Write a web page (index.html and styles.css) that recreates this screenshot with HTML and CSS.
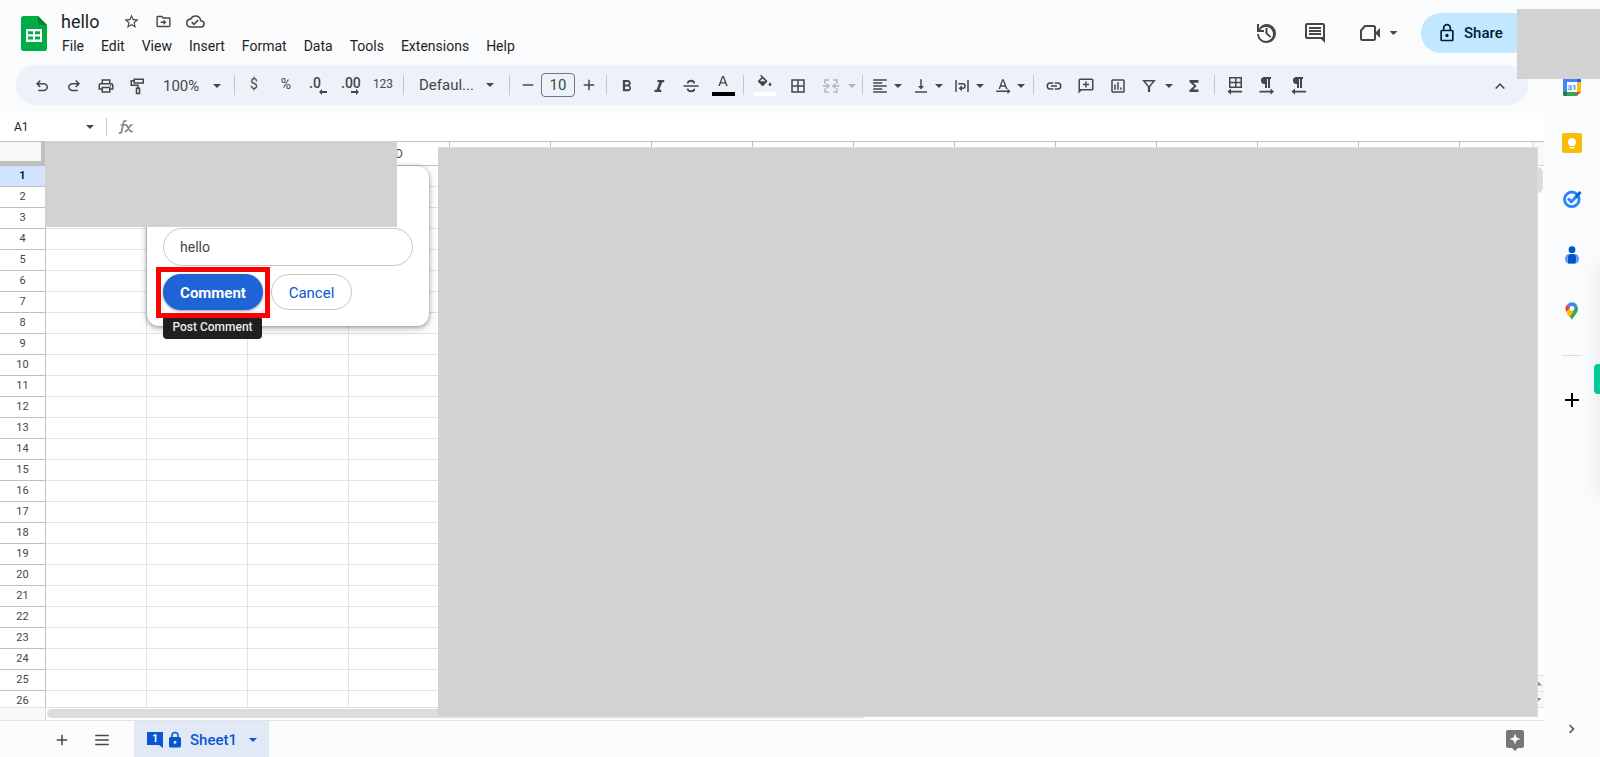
FILE: index.html
```html
<!DOCTYPE html>
<html lang="en">
<head>
<meta charset="utf-8">
<title>hello</title>
<link rel="stylesheet" href="styles.css">
</head>
<body>
<svg class="defs" aria-hidden="true">
  <symbol id="undo" viewBox="0 -960 960 960"><path d="M280-200v-80h284q63 0 109.500-40T720-420q0-60-46.500-100T564-560H312l104 104-56 56-200-200 200-200 56 56-104 104h252q97 0 166.500 63T800-420q0 94-69.500 157T564-200H280Z"/></symbol>
  <symbol id="lock" viewBox="0 0 24 24"><path d="M18 8h-1V6A5 5 0 0 0 7 6v2H6a2 2 0 0 0-2 2v10c0 1.100.9 2 2 2h12a2 2 0 0 0 2-2V10a2 2 0 0 0-2-2ZM9 6a3 3 0 0 1 6 0v2H9V6Zm9 14H6V10h12v10Zm-6-3a2 2 0 1 0 0-4 2 2 0 0 0 0 4Z"/></symbol>
  <symbol id="lockfill" viewBox="0 0 24 24"><path d="M18 8h-1V6A5 5 0 0 0 7 6v2H6a2 2 0 0 0-2 2v10c0 1.100.9 2 2 2h12a2 2 0 0 0 2-2V10a2 2 0 0 0-2-2ZM9 6a3 3 0 0 1 6 0v2H9V6Zm3 11a2 2 0 1 1 0-4 2 2 0 0 1 0 4Z"/></symbol>
  <symbol id="pilcrow" viewBox="0 0 18 18"><path d="M8 1h7v2h-1v9h-2V3h-1v9H9V8a3.500 3.500 0 0 1-1-7Z"/></symbol>
</svg>

<header class="top">
  <a class="logo" href="#" aria-label="Sheets home"><svg viewBox="0 0 26 35"><path fill="#00ac47" d="M2.500 0H17l9 9v23.500a2.500 2.500 0 0 1-2.500 2.500h-21A2.500 2.500 0 0 1 0 32.500v-30A2.500 2.500 0 0 1 2.500 0Z"/><path fill="#00832d" d="M17 0l9 9h-9Z"/><path fill="#fff" fill-rule="evenodd" d="M5 13h16v13H5Zm2 2.200v3h5v-3Zm7 0v3h5v-3Zm-7 5.200v3h5v-3Zm7 0v3h5v-3Z"/></svg></a>
  <div class="doc">
    <div class="doc-name">
      <h1>hello</h1>
      <button class="mini" aria-label="Star"><svg viewBox="0 0 24 24"><path d="m22 9.240-7.190-.62L12 2 9.190 8.630 2 9.240l5.460 4.730L5.820 21 12 17.270 18.180 21l-1.630-7.030L22 9.240ZM12 15.400l-3.760 2.270 1-4.280-3.320-2.880 4.380-.38L12 6.100l1.710 4.040 4.380.38-3.320 2.880 1 4.280L12 15.400Z"/></svg></button>
      <button class="mini" aria-label="Move"><svg viewBox="0 0 24 24"><path d="M20 6h-8l-2-2H4a2 2 0 0 0-2 2v12c0 1.100.9 2 2 2h16a2 2 0 0 0 2-2V8a2 2 0 0 0-2-2Zm0 12H4V6h5.200l2 2H20v10Zm-8-1 4-4-4-4v3H8v2h4v3Z"/></svg></button>
      <button class="mini" aria-label="Saved to cloud"><svg viewBox="0 0 24 24"><path d="M19.350 10.040A7.490 7.490 0 0 0 12 4a7.500 7.500 0 0 0-6.650 4.040A6 6 0 0 0 6 20h13a5 5 0 0 0 .35-9.960ZM19 18H6a4 4 0 0 1-.44-7.980l1.070-.11.500-.95a5.500 5.500 0 0 1 10.260 1.470l.3 1.500 1.530.11A3 3 0 0 1 19 18Zm-9-3.820-2.090-2.090L6.500 13.500 10 17l6.010-6.010-1.410-1.410L10 14.180Z"/></svg></button>
    </div>
    <nav class="menus"><button>File</button><button>Edit</button><button>View</button><button>Insert</button><button>Format</button><button>Data</button><button>Tools</button><button>Extensions</button><button>Help</button></nav>
  </div>
  <div class="actions">
    <button aria-label="Version history"><svg viewBox="0 0 24 24"><path d="M13 3a9 9 0 0 0-8 4.900V3H3v8h7V9H6.200A7 7 0 1 1 5 13H3a9.500 9.500 0 1 0 10-10Zm-1.500 4v5.800l4.500 4 1.300-1.400-3.800-3.400V7Z"/></svg></button>
    <button aria-label="Comments"><svg viewBox="0 0 24 24"><path d="M22 4a2 2 0 0 0-2-2H4a2 2 0 0 0-2 2v12c0 1.100.9 2 2 2h14l4 4V4Zm-2 12H4V4h16v12ZM6 12h12v2H6Zm0-3h12v2H6Zm0-3h12v2H6Z"/></svg></button>
    <button class="meet" aria-label="Meet"><svg viewBox="0 0 24 24"><path fill="none" stroke="currentColor" stroke-width="2" d="M7 5h8.500a1.500 1.500 0 0 1 1.500 1.500v11a1.500 1.500 0 0 1-1.500 1.500h-11A1.500 1.500 0 0 1 3 17.500V9.500Z"/><path d="m17 12 5-5v10Z"/></svg><i class="arrow"></i></button>
    <button class="share"><svg><use href="#lock"/></svg>Share</button>
  </div>
</header>

<main class="app">
  <div class="toolbar" role="toolbar">
    <button aria-label="Undo"><svg><use href="#undo"/></svg></button>
    <button aria-label="Redo"><svg class="flip"><use href="#undo"/></svg></button>
    <button aria-label="Print"><svg viewBox="0 0 24 24"><path d="M19 8h-1V3H6v5H5a3 3 0 0 0-3 3v6h4v4h12v-4h4v-6a3 3 0 0 0-3-3ZM8 5h8v3H8V5Zm8 14H8v-4h8v4Zm2-4v-2H6v2H4v-4c0-.6.400-1 1-1h14c.6 0 1 .4 1 1v4h-2Z"/><circle cx="18" cy="11.500" r="1"/></svg></button>
    <button aria-label="Paint format"><svg viewBox="0 0 24 24"><path fill="none" stroke="currentColor" stroke-width="2" d="M7 3h12v5H7ZM7 5H3v6h9v4M10 15h4v7h-4Z"/></svg></button>
    <button class="zoom">100%<i class="arrow"></i></button>
    <span class="sep"></span>
    <button class="sym">$</button>
    <button class="sym">%</button>
    <button class="dec" aria-label="Decrease decimal places"><b>.0</b><svg viewBox="0 0 8 6"><path d="M3 0v2h5v2H3v2L0 3Z"/></svg></button>
    <button class="dec" aria-label="Increase decimal places"><b>.00</b><svg viewBox="0 0 8 6"><path d="M5 0v2H0v2h5v2l3-3Z"/></svg></button>
    <button class="num">123</button>
    <span class="sep"></span>
    <button class="font">Defaul...<i class="arrow"></i></button>
    <span class="sep"></span>
    <button class="step" aria-label="Decrease font size"><svg viewBox="0 0 24 24"><path d="M5 11h14v2H5Z"/></svg></button>
    <input class="size" aria-label="Font size" value="10">
    <button class="step" aria-label="Increase font size"><svg viewBox="0 0 24 24"><path d="M5 11h6V5h2v6h6v2h-6v6h-2v-6H5Z"/></svg></button>
    <span class="sep"></span>
    <button aria-label="Bold"><svg viewBox="0 0 24 24"><path d="M15.600 11.300A4.200 4.200 0 0 0 13.250 4H6.500v15h7.300a4.300 4.300 0 0 0 1.800-7.700ZM9.500 6.600h3.200a1.650 1.650 0 0 1 0 3.300H9.500Zm3.800 9.800H9.500v-3.800h3.800a1.900 1.900 0 0 1 0 3.800Z"/></svg></button>
    <button aria-label="Italic"><svg viewBox="0 0 24 24"><path d="M10 4v3h2.600l-3.900 10H6v3h9v-3h-2.600l3.900-10H19V4Z"/></svg></button>
    <button aria-label="Strikethrough"><svg viewBox="0 0 24 24"><path d="M2 11h20v2H2Z"/><path fill="none" stroke="currentColor" stroke-width="2.400" d="M16.500 8.500C16 6.500 14.500 5 12 5S7.500 6.500 7.500 8.500M7.300 15.500c.5 2.400 2.200 3.500 4.700 3.500 2.800 0 4.500-1.300 4.500-3.500"/></svg></button>
    <button class="swatch black" aria-label="Text color"><svg viewBox="0 0 24 24"><path d="M10.600 3 5 18h2.300l1.300-3.700h6.800l1.300 3.700H19L13.400 3Zm-1.300 9.300L12 5l2.700 7.300Z"/></svg></button>
    <span class="sep"></span>
    <button class="swatch white" aria-label="Fill color"><svg viewBox="0 0 24 24"><path d="M16.600 9.900 7.600 1 6.200 2.400l2.400 2.400-5.200 5.100a1.500 1.500 0 0 0 0 2.200l5.500 5.500c.6.600 1.500.6 2.200 0l5.500-5.500c.5-.6.500-1.600-.1-2.200ZM5.800 11 10 6.800l4.200 4.200Zm15.200 1.500s-2 2.200-2 3.500a2 2 0 0 0 4 0c0-1.300-2-3.500-2-3.500Z"/></svg></button>
    <button class="borders" aria-label="Borders"><svg viewBox="0 0 24 24"><path d="M3 3v18h18V3Zm8 16H5v-6h6Zm0-8H5V5h6Zm8 8h-6v-6h6Zm0-8h-6V5h6Z"/></svg></button>
    <button class="split wide off" aria-label="Merge cells" disabled><svg viewBox="0 0 24 24"><path fill="none" stroke="currentColor" stroke-width="2" d="M9 4H4v5M4 15v5h5M15 4h5v5M20 15v5h-5M1 12h6M17 12h6"/><path d="m6 8 5 4-5 4Zm12 0-5 4 5 4Z"/></svg><i class="arrow"></i></button>
    <span class="sep"></span>
    <div class="group">
      <button class="split" aria-label="Horizontal align"><svg viewBox="0 0 24 24"><path d="M3 3h18v2H3Zm0 4h12v2H3Zm0 4h18v2H3Zm0 4h12v2H3Zm0 4h18v2H3Z"/></svg><i class="arrow"></i></button>
      <button class="split" aria-label="Vertical align"><svg viewBox="0 0 24 24"><path d="M16 12h-3V3h-2v9H8l4 4.500ZM4 19v2h16v-2Z"/></svg><i class="arrow"></i></button>
      <button class="split" aria-label="Text wrapping"><svg viewBox="0 0 24 24"><path d="M3 4h2v16H3Zm16 0h2v16h-2Z"/><path fill="none" stroke="currentColor" stroke-width="2" d="M7 9h6a3 3 0 0 1 0 6h-2"/><path d="m7.500 15 4.500-4v8Z"/></svg><i class="arrow"></i></button>
      <button class="split" aria-label="Text rotation"><svg viewBox="0 0 24 24"><path d="M10.900 3 6 16h2.100l1-3h5.700l1 3H18L13 3ZM9.800 11 12 5l2.200 6ZM3 18h15v-2.500l4 3.500-4 3.500V20H3Z"/></svg><i class="arrow"></i></button>
    </div>
    <span class="sep"></span>
    <button aria-label="Insert link"><svg viewBox="0 0 24 24"><path d="M17 7h-4v2h4a3 3 0 0 1 0 6h-4v2h4a5 5 0 0 0 0-10Zm-6 8H7a3 3 0 0 1 0-6h4V7H7a5 5 0 0 0 0 10h4v-2Zm-3-4h8v2H8Z"/></svg></button>
    <button aria-label="Insert comment"><svg viewBox="0 0 24 24"><path d="M20 2H4a2 2 0 0 0-2 2v18l4-4h14a2 2 0 0 0 2-2V4a2 2 0 0 0-2-2Zm0 14H4V4h16Zm-9-2h2v-3h3V9h-3V6h-2v3H8v2h3Z"/></svg></button>
    <button aria-label="Insert chart"><svg viewBox="0 0 24 24"><path d="M19 3H5a2 2 0 0 0-2 2v14c0 1.100.9 2 2 2h14a2 2 0 0 0 2-2V5a2 2 0 0 0-2-2Zm0 16H5V5h14ZM7 10h2v7H7Zm4-3h2v10h-2Zm4 7h2v3h-2Z"/></svg></button>
    <button class="split filter" aria-label="Filter"><svg viewBox="0 0 24 24"><path fill="none" stroke="currentColor" stroke-width="2" d="M5 5h14l-7 8.500Z"/><path d="M10.500 12h3v8h-3Z"/></svg><i class="arrow"></i></button>
    <button aria-label="Functions"><svg viewBox="0 0 24 24"><path d="M18 4H6v2.500L12 12l-6 5.500V20h12v-3.500h-7L15.500 12 11 7.500h7Z"/></svg></button>
    <span class="sep"></span>
    <button aria-label="Sheet direction"><svg viewBox="0 0 18 18"><path d="M3 0v11h13V0Zm6 9.500H4.500V6.300H9Zm0-4.700H4.500V1.500H9Zm5.500 4.700h-4V6.300h4Zm0-4.700h-4V1.500h4ZM5 11.500v2.300h11v1.700H5v2.300l-3.500-3.200Z"/></svg></button>
    <button aria-label="Left to right"><svg viewBox="0 0 18 18"><use href="#pilcrow" x="-2" y="-1" width="18" height="18"/><path d="M1.500 13.800h11v-2.300l3.500 3.100-3.500 3.100v-2.300h-11Z"/></svg></button>
    <button aria-label="Right to left"><svg viewBox="0 0 18 18"><use href="#pilcrow" x="-2" y="-1" width="18" height="18"/><path d="M16 13.800H5v-2.300l-3.500 3.100L5 17.700v-2.300h11Z"/></svg></button>
    <button class="collapse" aria-label="Hide the menus"><svg viewBox="0 0 24 24"><path d="m12 8-6.500 6.500L7 16l5-5 5 5 1.500-1.500Z"/></svg></button>
  </div>

  <div class="formula">
    <button class="namebox">A1<i class="arrow"></i></button>
    <span class="fx"><svg viewBox="0 0 16 16"><path fill="none" stroke="currentColor" stroke-width="1.700" d="M8.500 2C6.500 1.200 5.600 2.600 5.300 4.500L3.700 12c-.3 1.700-1.300 2.600-2.900 2M2.500 6h5M7 6h1.500l4 6.500H15M14.500 6H13l-5 6.500H6.500"/></svg></span>
  </div>

  <section class="sheet">
    <div class="cells"><table><thead><tr><th class="corner"></th></tr></thead><tbody></tbody></table></div>
    <div class="vscroll"><div class="vhead"></div><div class="vthumb"></div><button aria-label="Scroll up"><i class="up"></i></button><button aria-label="Scroll down"><i class="arrow"></i></button></div>
    <div class="hscroll"><span></span><div></div></div>

    <form class="dialog" onsubmit="return false">
      <input class="reply" aria-label="Comment text" value="hello">
      <div class="dialog-actions"><button class="post">Comment</button><button class="cancel" type="button">Cancel</button></div>
      <div class="marker"></div>
      <div class="tip" role="tooltip">Post Comment</div>
    </form>
    <div class="mask mask-head"></div>
    <div class="mask mask-grid"></div>
  </section>

  <footer class="tabs">
    <button class="tool" aria-label="Add sheet"><svg viewBox="0 0 24 24"><path d="M5 11h6V5h2v6h6v2h-6v6h-2v-6H5Z"/></svg></button>
    <button class="tool" aria-label="All sheets"><svg viewBox="0 0 24 24"><path d="M3 5h18v2H3Zm0 6h18v2H3Zm0 6h18v2H3Z"/></svg></button>
    <button class="tab"><span class="count">1</span><svg><use href="#lockfill"/></svg>Sheet1<i class="arrow"></i></button>
    <button class="explore" aria-label="Explore"><svg viewBox="0 0 18 21"><path fill-rule="evenodd" d="M2 0h14a2 2 0 0 1 2 2v14a2 2 0 0 1-2 2h-4l-3 3-3-3H2a2 2 0 0 1-2-2V2a2 2 0 0 1 2-2Zm7 3.500L7.500 7.500l-4 1.500 4 1.500L9 14.500l1.500-4 4-1.500-4-1.500Z"/></svg></button>
  </footer>
</main>

<aside class="side">
  <button aria-label="Calendar"><svg viewBox="0 0 20 20"><path fill="#4285f4" d="M2.500 1H15v4H5v10H1V2.500A1.500 1.500 0 0 1 2.500 1Z"/><path fill="#1967d2" d="M15 1h2.500A1.500 1.500 0 0 1 19 2.500V5h-4Z"/><path fill="#fbbc04" d="M15 5h4v10h-4Z"/><path fill="#34a853" d="M5 15h10v4H5Z"/><path fill="#188038" d="M1 15h4v4H2.500A1.500 1.500 0 0 1 1 17.500Z"/><path fill="#ea4335" d="M15 15h4l-4 4Z"/><path fill="#fff" d="M5 5h10v10H5Z"/><text x="10" y="13" text-anchor="middle" fill="#4285f4">31</text></svg></button>
  <button aria-label="Keep"><svg viewBox="0 0 20 20"><rect width="20" height="20" rx="2" fill="#fbbc04"/><path fill="#fff" d="M10 5a4.200 4.200 0 0 0-2.500 7.500V13h5v-.5A4.200 4.200 0 0 0 10 5Zm-2.200 9h4.400v1.500H7.800Z"/></svg></button>
  <button aria-label="Tasks"><svg viewBox="0 0 20 20"><circle cx="9.800" cy="10.300" r="7.300" fill="none" stroke="#2684fc" stroke-width="2.800"/><path fill="none" stroke="#2684fc" stroke-width="3" d="m6 9.500 3.300 3.200 5-5"/><path fill="none" stroke="#0066da" stroke-width="3" d="m13.500 8.500 5-5.500"/></svg></button>
  <button aria-label="Contacts"><svg viewBox="0 0 20 20"><circle cx="10" cy="4.700" r="3.400" fill="#0057cc"/><rect x="3" y="9" width="14" height="9.500" rx="4.200" fill="#6e9bf7"/><path fill="#0057cc" d="M6 13c0-2.500 1-4 3-4h2c2 0 3 1.500 3 4 0 3 0 5.500-1 5.500H6Z"/></svg></button>
  <button aria-label="Maps"><svg viewBox="0 0 20 20"><path fill="#34a853" d="M10 19c1-3.500 6-6.500 6-11.500L14.800 4 5.500 13C8 15.500 9 17 10 19Z"/><path fill="#fbbc04" d="M4.500 11.500 8 8l3.500 3-4.200 5Z"/><path fill="#ea4335" d="M5.400 3.500A6 6 0 0 0 4.500 11l4-4Z"/><path fill="#4285f4" d="M5.400 3.500A6 6 0 0 1 15 4l-5 5Z"/><circle cx="10" cy="7.500" r="2.400" fill="#fff"/></svg></button>
  <hr>
  <button class="add" aria-label="Get add-ons"><svg viewBox="0 0 20 20"><path d="M3 9h6V3h2v6h6v2h-6v6H9v-6H3Z"/></svg></button>
  <button class="hide" aria-label="Hide side panel"><svg viewBox="0 0 20 20"><path d="m5 4.500 2-2 7.500 7.500L7 17.500l-2-2L10.500 10Z"/></svg></button>
  <div class="glow"></div>
  <div class="green"></div>
</aside>
<div class="mask mask-user"></div>
<script src="grid.js"></script>
</body>
</html>
```
FILE: styles.css
```css
* { box-sizing: border-box; }
body {
  margin: 0;
  height: 100vh;
  display: grid;
  grid-template: 65px minmax(0, 1fr) / minmax(0, 1fr) 56px;
  position: relative;
  overflow: hidden;
  background: #f9fbfd;
  color: #1f1f1f;
  font: 14px/20px Roboto, "Liberation Sans", sans-serif;
}
.defs { display: none; }
button, input { font: inherit; color: inherit; }
button { display: flex; align-items: center; justify-content: center; padding: 0; border: 0; background: none; }
svg { display: block; flex: none; fill: currentColor; }
.arrow { flex: none; width: 8px; height: 4px; background: currentColor; clip-path: polygon(0 0, 100% 0, 50% 100%); }
.up { flex: none; width: 8px; height: 4px; background: currentColor; clip-path: polygon(50% 0, 100% 100%, 0 100%); }

.top { grid-column: 1 / -1; display: flex; align-items: flex-start; padding-left: 21px; }
.logo { margin-top: 16px; }
.logo svg { width: 26px; height: 35px; }
.doc { padding: 9px 0 0 8px; }
.doc-name { display: flex; align-items: center; height: 25px; padding-left: 6px; }
.doc-name h1 { margin: 0 12px 0 0; width: 42px; font-size: 18px; line-height: 24px; font-weight: 400; }
.mini { width: 32px; height: 24px; color: #444746; }
.mini svg { width: 17px; height: 17px; }
.mini:last-child svg { width: 19px; height: 19px; }
.menus { display: flex; gap: 3px; }
.menus button { padding: 2px 7px; font-size: 14px; line-height: 20px; }
.actions { display: flex; align-items: center; margin: 13px 60px 0 auto; color: #444746; }
.actions > button { width: 49px; height: 40px; }
.actions svg { width: 24px; height: 24px; }
.actions .meet { width: 61px; gap: 8px; margin: 0 13px 0 8px; }
.actions .share { width: 119px; justify-content: flex-start; gap: 7px; padding-left: 16px; border-radius: 20px; background: #c2e7ff; color: #001d35; font-size: 15px; font-weight: 500; }
.actions .share svg { width: 20px; height: 20px; }

.app { display: flex; flex-direction: column; min-width: 0; }
.toolbar { display: flex; align-items: center; height: 40px; flex: none; margin: 0 16px 8px; padding: 0 12px 0 10px; border-radius: 20px; background: #edf2fa; color: #444746; }
.toolbar button { width: 32px; height: 32px; flex: none; padding-top: 2px; }
.toolbar svg { width: 18px; height: 18px; }
.toolbar .flip { transform: scaleX(-1); }
.sep { flex: none; width: 9px; height: 20px; background: linear-gradient(#c7c7c7, #c7c7c7) center / 1px 100% no-repeat; }
.toolbar .zoom { width: 76px; padding: 2px 9px 0; justify-content: space-between; font-size: 15px; }
.toolbar .font { width: 97px; padding: 0 11px; justify-content: space-between; font-size: 15px; }
.toolbar .sym { padding: 0 2px 2px 0; }
.toolbar .num { font-size: 12px; padding: 0 0 2px; }
.toolbar .dec { flex-direction: column; line-height: 12px; font-size: 14px; }
.dec b { width: 20px; font-weight: 500; text-align: left; }
.toolbar .dec svg { width: 8px; height: 6px; margin-left: 8px; }
.toolbar .step { width: 27px; padding: 0; }
.size { width: 34px; height: 24px; padding: 0; border: 1px solid #747775; border-radius: 4px; background: none; text-align: center; font-size: 15px; }
.toolbar .swatch { flex-direction: column; padding: 0; }
.toolbar .swatch svg { height: 16px; }
.swatch::after { content: ""; width: 23px; height: 4px; margin-top: 2px; }
.black::after { background: #000; }
.white::after { background: #fff; }
.toolbar .borders { padding-left: 4px; }
.group { display: flex; margin-right: -2px; }
.toolbar .split { width: 41px; gap: 5px; justify-content: flex-start; padding-left: 4px; }
.toolbar .wide { width: 46px; gap: 8px; padding-left: 10px; }
.toolbar .filter { width: 44px; gap: 7px; padding-left: 6px; }
.toolbar .off { color: #b2b5b9; }
.toolbar .collapse { margin-left: auto; }

.formula { display: flex; align-items: center; height: 29px; flex: none; border-bottom: 1px solid #c0c0c0; background: #fff; }
.namebox { width: 107px; height: 18px; padding: 0 12px 0 14px; justify-content: space-between; border-right: 1px solid #c7c7c7; font-size: 12px; }
.namebox .arrow { color: #444746; }
.fx { padding-left: 11px; color: #80868b; }
.fx svg { width: 16px; height: 16px; }

.sheet { position: relative; flex: 1; min-height: 0; display: grid; grid-template: minmax(0, 1fr) 12px / minmax(0, 1fr) 12px; background: #fff; }
.cells { overflow: hidden; border-bottom: 1px solid #e1e1e1; }
table { border-collapse: separate; border-spacing: 0; table-layout: fixed; width: 1561px; }
th, td { height: 21px; padding: 0; border: solid #e2e3e3; border-width: 0 1px 1px 0; }
th { border-color: #c0c0c0; color: #444746; font-size: 11px; line-height: 16px; font-weight: 400; }
thead th { width: 101px; height: 24px; font-size: 12px; }
thead .corner { width: 46px; border: solid #c0c0c0; border-width: 0 5px 5px 0; background: #f8f9fa; }
tbody .active { background: #d3e3fd; color: #041e49; font-weight: 700; }
.vscroll { display: flex; flex-direction: column; border-bottom: 1px solid #e1e1e1; color: #80868b; }
.vhead { height: 24px; background: #f8f8f8; border: solid #d9d9d9; border-width: 0 0 1px 1px; }
.vthumb { width: 11px; height: 26px; margin: 1px 0 auto; border-radius: 6px; background: #dadce0; }
.vscroll button { height: 16px; border-top: 1px solid #e1e1e1; background: #f8f8f8; }
.hscroll { grid-column: 1 / -1; display: flex; align-items: flex-start; }
.hscroll span { width: 46px; height: 12px; background: #f8f8f8; border-right: 1px solid #d9d9d9; }
.hscroll div { width: 820px; height: 9px; margin: 1px 0 0 1px; border-radius: 5px; background: #dadce0; }

.dialog { position: absolute; left: 147px; top: 24px; width: 282px; padding: 62px 16px 16px; border-radius: 12px; background: #fff; box-shadow: 0 1px 4px rgba(60, 64, 67, .5), 0 3px 8px rgba(60, 64, 67, .2); }
.reply { display: block; width: 100%; height: 38px; padding: 0 16px; border: 1px solid #c7c7c7; border-radius: 19px; font-size: 14px; color: #444746; background: #fff; }
.dialog-actions { display: flex; gap: 8px; margin-top: 8px; font-size: 15px; }
.dialog-actions button { height: 36px; padding-top: 2px; border-radius: 18px; }
.post { width: 100px; background: #1f64d6; color: #fff; font-weight: 700; box-shadow: 0 1px 3px rgba(0, 0, 0, .4); }
.cancel { width: 81px; border: 1px solid #c7c7c7; color: #0b57d0; }
.marker { position: absolute; left: 9px; top: 101px; width: 114px; height: 51px; border: 5px solid #f00; z-index: 1; }
.tip { position: absolute; left: 16px; top: 150px; width: 99px; height: 23px; border-radius: 4px; background: #202020; color: #e8eaed; font-size: 12px; line-height: 22px; font-weight: 500; text-align: center; }

.mask { position: absolute; background: #d2d2d2; }
.mask-head { left: 45px; top: -1px; width: 352px; height: 86px; }
.mask-grid { left: 438px; right: 6px; top: 5px; bottom: 3px; border: 1px solid #dcdcdc; border-left: 0; }
.mask-user { top: 9px; right: 0; width: 83px; height: 70px; }

.tabs { display: flex; align-items: center; height: 37px; flex: none; border-top: 1px solid #e1e3e1; padding-left: 42px; color: #444746; }
.tool { width: 40px; height: 36px; padding-top: 2px; }
.tool svg { width: 18px; height: 18px; }
.tab { height: 36px; margin-left: 12px; padding: 2px 12px 0 13px; background: #e1e9f7; color: #0b57d0; font-size: 15px; font-weight: 500; }
.tab svg { width: 18px; height: 18px; margin: 0 6px 0 3px; }
.tab .arrow { margin-left: 12px; }
.count { width: 16px; height: 16px; background: #0b57d0; color: #fff; font-size: 10px; line-height: 13px; font-weight: 700; clip-path: polygon(0 0, 100% 0, 100% 100%, 75% 82%, 0 82%); }
.explore { margin: 2px 20px 0 auto; color: #747775; }
.explore svg { width: 18px; height: 21px; }

.side { position: relative; display: flex; flex-direction: column; align-items: center; overflow: hidden; }
.side button { width: 40px; height: 40px; margin-bottom: 16px; flex: none; }
.side button:first-child { margin-top: 2px; }
.side svg { width: 20px; height: 20px; }
.side text { font: 700 8px Roboto, sans-serif; }
.side hr { width: 20px; height: 1px; margin: 8px 0 24px; border: 0; background: #dadce0; }
.side .add { color: #000; }
.side .hide { margin: auto 0 8px; color: #5f6368; }
.side .hide svg { width: 12px; height: 12px; }
.glow { position: absolute; right: -10px; top: 200px; width: 10px; height: 230px; box-shadow: 0 0 20px rgba(0, 0, 0, .12); }
.green { position: absolute; right: 0; top: 299px; width: 6px; height: 30px; border-radius: 4px 0 0 4px; background: #00ca99; }
```
FILE: grid.js
```js
const columns = "ABCDEFGHIJKLMNO".split("");
const headRow = document.querySelector("thead tr");
for (const name of columns) {
  const th = document.createElement("th");
  th.scope = "col";
  th.textContent = name;
  headRow.append(th);
}
const body = document.querySelector("tbody");
for (let n = 1; n <= 26; n++) {
  const row = body.insertRow();
  const th = document.createElement("th");
  th.scope = "row";
  th.textContent = n;
  if (n === 1) th.className = "active";
  row.append(th);
  for (const name of columns) row.insertCell();
}
```
